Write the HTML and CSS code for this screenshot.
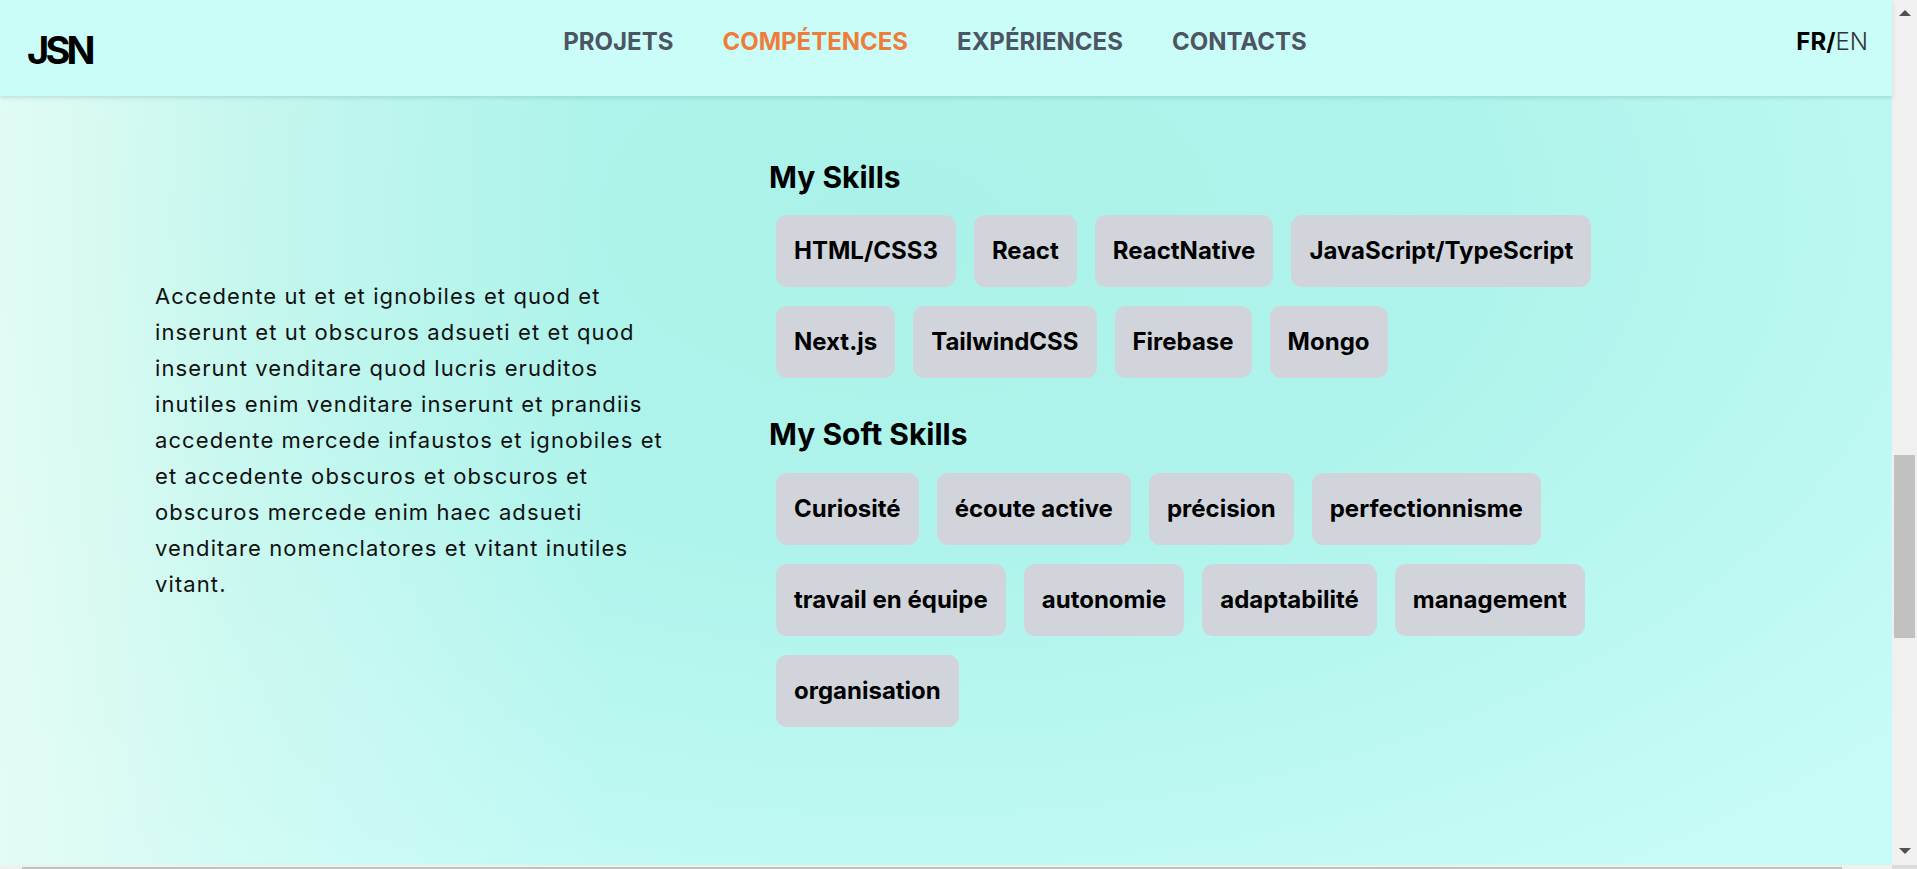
FILE: index.html
```html
<!DOCTYPE html>
<html lang="fr">
<head>
<meta charset="utf-8">
<title>JSN - Compétences</title>
<link rel="stylesheet" href="styles.css">
</head>
<body>
<div class="window">
  <div class="viewport-row">
    <div class="page">
      <header class="topbar">
        <div class="logo">JSN</div>
        <nav class="nav">
          <a class="nav-link">PROJETS</a>
          <a class="nav-link active">COMPÉTENCES</a>
          <a class="nav-link">EXPÉRIENCES</a>
          <a class="nav-link">CONTACTS</a>
        </nav>
        <div class="lang"><span class="lang-on">FR/</span><span class="lang-off">EN</span></div>
      </header>
      <main class="skills-section">
        <div class="intro">
          <p>Accedente ut et et ignobiles et quod et inserunt et ut obscuros adsueti et et quod inserunt venditare quod lucris eruditos inutiles enim venditare inserunt et prandiis accedente mercede infaustos et ignobiles et et accedente obscuros et obscuros et obscuros mercede enim haec adsueti venditare nomenclatores et vitant inutiles vitant.</p>
        </div>
        <div class="skills">
          <h2 class="skills-title">My Skills</h2>
          <div class="chips">
            <span class="chip">HTML/CSS3</span>
            <span class="chip">React</span>
            <span class="chip">ReactNative</span>
            <span class="chip">JavaScript/TypeScript</span>
            <span class="chip">Next.js</span>
            <span class="chip">TailwindCSS</span>
            <span class="chip">Firebase</span>
            <span class="chip">Mongo</span>
          </div>
          <h2 class="skills-title soft">My Soft Skills</h2>
          <div class="chips">
            <span class="chip">Curiosité</span>
            <span class="chip">écoute active</span>
            <span class="chip">précision</span>
            <span class="chip">perfectionnisme</span>
            <span class="chip">travail en équipe</span>
            <span class="chip">autonomie</span>
            <span class="chip">adaptabilité</span>
            <span class="chip">management</span>
            <span class="chip">organisation</span>
          </div>
        </div>
      </main>
    </div>
    <div class="vscroll">
      <div class="arrow arrow-up"></div>
      <div class="vtrack"><div class="vthumb"></div></div>
      <div class="arrow arrow-down"></div>
    </div>
  </div>
  <div class="hscroll-row">
    <div class="htrack"><div class="hthumb"></div></div>
    <div class="corner"></div>
  </div>
</div>
</body>
</html>
```

FILE: styles.css
```css
* { box-sizing: border-box; }
html, body { margin: 0; padding: 0; }
body {
  font-family: Inter, "Noto Sans", "Liberation Sans", sans-serif;
  color: #000;
  overflow: hidden;
}
.window {
  width: 1917px;
  height: 869px;
  display: flex;
  flex-direction: column;
  overflow: hidden;
}
.viewport-row {
  display: flex;
  height: 865px;
}
.page {
  flex: 1;
  display: flex;
  flex-direction: column;
  background:
    linear-gradient(90deg, rgba(232, 252, 244, 0.85) 0%, rgba(225, 250, 240, 0.45) 12%, rgba(200, 245, 232, 0) 32%),
    radial-gradient(ellipse 70% 90% at 48% 25%, #aaf2e9 0%, #aff4ec 45%, #bcf8f2 75%, #c6fbf8 100%);
}
.topbar {
  position: relative;
  z-index: 1;
  height: 96px;
  flex: none;
  display: flex;
  align-items: center;
  justify-content: space-between;
  padding: 0 24px 0 27px;
  background: #cbfdf8;
  box-shadow: 0 2px 4px rgba(40, 110, 100, 0.18);
}
.logo {
  font-size: 38px;
  font-weight: 700;
  letter-spacing: -0.1em;
  line-height: 1;
  padding-top: 4px;
}
.nav {
  display: flex;
  gap: 49px;
  margin-right: 18px;
  margin-bottom: 12px;
}
.nav-link {
  font-size: 24px;
  font-weight: 700;
  color: #4b5563;
  text-decoration: none;
  line-height: 1;
}
.nav-link.active { color: #ef7d3a; }
.lang {
  font-size: 24px;
  line-height: 1;
  margin-bottom: 12px;
}
.lang-on { font-weight: 700; color: #000; }
.lang-off { font-weight: 300; color: #333; }

.skills-section {
  flex: 1;
  display: flex;
  align-items: flex-start;
  padding: 63px 0 0 155px;
}
.intro {
  width: 516px;
  margin-top: 119px;
  flex: none;
}
.intro p {
  margin: 0;
  font-size: 22px;
  line-height: 36px;
  letter-spacing: 0.05em;
  color: #111;
}
.skills {
  margin-left: 98px;
  width: 900px;
  flex: none;
}
.skills-title {
  margin: 0 0 20px 0;
  font-size: 30px;
  line-height: 36px;
  font-weight: 700;
}
.skills-title.soft { margin-top: 38px; margin-bottom: 21px; }
.chips {
  display: flex;
  flex-wrap: wrap;
  column-gap: 18px;
  row-gap: 19px;
  padding-left: 7px;
}
.chip {
  background: #d1d5db;
  border-radius: 11px;
  padding: 20px 18px;
  font-size: 24px;
  line-height: 32px;
  font-weight: 700;
  color: #000;
}

.vscroll {
  width: 25px;
  flex: none;
  background: #f0f0f0;
  display: flex;
  flex-direction: column;
  align-items: center;
}
.arrow {
  width: 0;
  height: 0;
  border-left: 6px solid transparent;
  border-right: 6px solid transparent;
  flex: none;
}
.arrow-up {
  margin-top: 10px;
  border-bottom: 6px solid #505050;
}
.arrow-down {
  margin-bottom: 11px;
  border-top: 6px solid #505050;
}
.vtrack {
  flex: 1;
  width: 100%;
  padding: 439px 2px 0 2px;
}
.vthumb {
  height: 183px;
  background: #c1c1c1;
}
.hscroll-row {
  height: 4px;
  display: flex;
}
.htrack {
  flex: 1;
  background: #f0f0f0;
  padding: 2px 50px 0 22px;
}
.hthumb {
  height: 2px;
  background: #c1c1c1;
}
.corner {
  width: 25px;
  background: #dcdcdc;
}
```
